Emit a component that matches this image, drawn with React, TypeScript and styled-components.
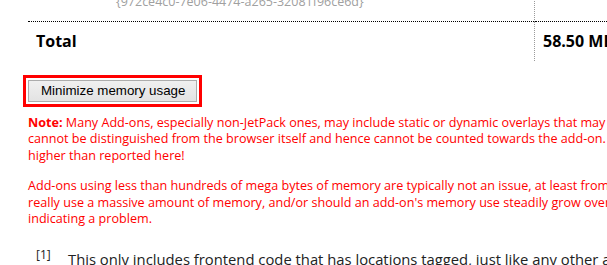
import styled, { createGlobalStyle } from 'styled-components'

const GlobalStyle = createGlobalStyle`
  html, body {
    margin: 0;
    padding: 0;
    background: #fff;
    overflow: hidden;
  }
  body {
    font-family: "Open Sans", "Noto Sans", sans-serif;
    color: #000;
  }
`

const Page = styled.div`
  width: 780px;
  margin-top: -7px;
  padding-left: 28px;
`

const MemTable = styled.table`
  border-collapse: collapse;
`

const Row = styled.tr<{ $divider?: boolean }>`
  border-bottom: ${p => (p.$divider ? '1px dotted #000' : 'none')};
`

const Cell = styled.td<{ $num?: boolean }>`
  padding: 0 8px;
  width: ${p => (p.$num ? '220px' : '490px')};
  border-left: ${p => (p.$num ? '1px dotted #9a9a9a' : 'none')};
  vertical-align: top;
`

const GuidCell = styled(Cell)`
  padding-bottom: 12px;
  line-height: 15px;
`

const Guid = styled.span`
  display: inline-block;
  padding-left: 80px;
  font-size: 12.5px;
  color: #a0a0a0;
`

const TotalCell = styled(Cell)`
  padding-top: 9px;
  padding-bottom: 10px;
  font-size: 16px;
  line-height: 20px;
  font-weight: 700;
`

const Actions = styled.div`
  margin-top: 17px;
`

const MinimizeButton = styled.button`
  height: 22px;
  padding: 0 11px 0 12px;
  font-family: "Liberation Sans", Arial, sans-serif;
  font-size: 13.33px;
  color: #000;
  background: linear-gradient(#f0f0f0, #e3e3e3);
  border: 1px solid #acacac;
  border-radius: 0;
  outline: 3px solid #ff0000;
  outline-offset: 2px;
`

const Warning = styled.p`
  margin: 13px 0 0;
  font-size: 12.6px;
  line-height: 16.5px;
  color: #ff0000;
  white-space: nowrap;

  & + & {
    margin-top: 14px;
  }

  b {
    font-weight: 700;
  }
`

const Footnote = styled.div`
  display: grid;
  grid-template-columns: 32px auto;
  align-items: start;
  margin-top: 20px;
  padding-left: 8px;
  white-space: nowrap;
  color: #222;
`

const FootMark = styled.span`
  font-size: 12px;
  line-height: 14px;
`

const FootText = styled.span`
  font-size: 14.8px;
  line-height: 22px;
`

export default function App() {
  return (
    <>
      <GlobalStyle />
      <Page>
        <MemTable>
          <tbody>
            <Row $divider>
              <GuidCell>
                <Guid>{'{972ce4c0-7e06-4474-a265-32081f96ce6d}'}</Guid>
              </GuidCell>
              <GuidCell $num />
            </Row>
            <Row>
              <TotalCell>Total</TotalCell>
              <TotalCell $num>58.50 MB</TotalCell>
            </Row>
          </tbody>
        </MemTable>

        <Actions>
          <MinimizeButton type="button">Minimize memory usage</MinimizeButton>
        </Actions>

        <Warning>
          <b>Note:</b> Many Add-ons, especially non-JetPack ones, may include static or dynamic overlays that may use memory that
          <br />
          cannot be distinguished from the browser itself and hence cannot be counted towards the add-on. Therefore the actual memory use may be
          <br />
          higher than reported here!
        </Warning>
        <Warning>
          Add-ons using less than hundreds of mega bytes of memory are typically not an issue, at least from a memory point of view. Should an add-on
          <br />
          really use a massive amount of memory, and/or should an add-on's memory use steadily grow over time, it might be a bug
          <br />
          indicating a problem.
        </Warning>

        <Footnote>
          <FootMark>[1]</FootMark>
          <FootText>This only includes frontend code that has locations tagged, just like any other add-on code.</FootText>
        </Footnote>
      </Page>
    </>
  )
}
